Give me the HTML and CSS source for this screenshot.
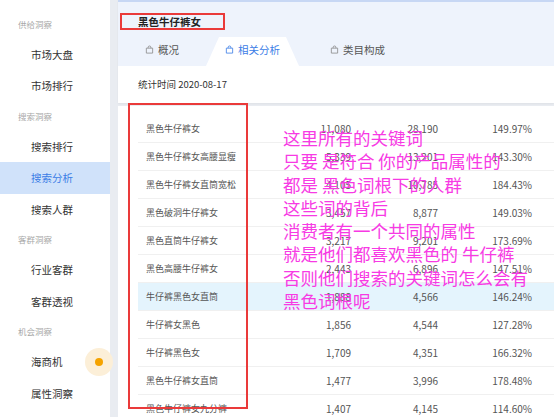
FILE: index.html
```html
<!DOCTYPE html>
<html lang="zh">
<head>
<meta charset="utf-8">
<title>搜索分析</title>
<link rel="stylesheet" href="styles.css">
</head>
<body>
<div class="app">
  <aside class="sidebar">
    <div class="group">供给洞察</div>
    <div class="item">市场大盘</div>
    <div class="item">市场排行</div>
    <div class="group">搜索洞察</div>
    <div class="item">搜索排行</div>
    <div class="item active">搜索分析</div>
    <div class="item">搜索人群</div>
    <div class="group">客群洞察</div>
    <div class="item">行业客群</div>
    <div class="item">客群透视</div>
    <div class="group">机会洞察</div>
    <div class="item has-dot">海商机<span class="dot"></span></div>
    <div class="item">属性洞察</div>
  </aside>
  <main class="main">
    <section class="head">
      <div class="topbar">
        <div class="title-row"><span class="title">黑色牛仔裤女</span></div>
        <nav class="tabs">
          <div class="tab"><svg class="ico" viewBox="0 0 10 10"><path d="M1.5 3.5h7v5.5h-7z M3.5 3.5V2.6a1.5 1.5 0 0 1 3 0v0.9"/></svg><span>概况</span></div>
          <div class="tab active"><svg class="ico" viewBox="0 0 10 10"><path d="M1.5 3.5h7v5.5h-7z M3.5 3.5V2.6a1.5 1.5 0 0 1 3 0v0.9"/></svg><span>相关分析</span></div>
          <div class="tab last"><svg class="ico" viewBox="0 0 10 10"><path d="M1.5 3.5h7v5.5h-7z M3.5 3.5V2.6a1.5 1.5 0 0 1 3 0v0.9"/></svg><span>类目构成</span></div>
        </nav>
      </div>
      <div class="stats">统计时间 2020-08-17</div>
    </section>
    <section class="table-card">
      <div class="row"><span class="kw">黑色牛仔裤女</span><span class="num">11,080</span><span class="num">28,190</span><span class="num">149.97%</span></div>
      <div class="row"><span class="kw">黑色牛仔裤女高腰显瘦</span><span class="num">5,339</span><span class="num">13,201</span><span class="num">143.30%</span></div>
      <div class="row"><span class="kw">黑色牛仔裤女直筒宽松</span><span class="num">4,105</span><span class="num">10,785</span><span class="num">184.43%</span></div>
      <div class="row"><span class="kw">黑色破洞牛仔裤女</span><span class="num">3,457</span><span class="num">8,877</span><span class="num">149.03%</span></div>
      <div class="row"><span class="kw">黑色直筒牛仔裤女</span><span class="num">3,217</span><span class="num">9,201</span><span class="num">173.69%</span></div>
      <div class="row"><span class="kw">黑色高腰牛仔裤女</span><span class="num">2,443</span><span class="num">6,896</span><span class="num">147.51%</span></div>
      <div class="row hl"><span class="kw">牛仔裤黑色女直筒</span><span class="num">1,888</span><span class="num">4,566</span><span class="num">146.24%</span></div>
      <div class="row"><span class="kw">牛仔裤女黑色</span><span class="num">1,856</span><span class="num">4,544</span><span class="num">127.28%</span></div>
      <div class="row"><span class="kw">牛仔裤黑色女</span><span class="num">1,709</span><span class="num">4,351</span><span class="num">166.32%</span></div>
      <div class="row"><span class="kw">黑色牛仔裤女直筒</span><span class="num">1,477</span><span class="num">3,996</span><span class="num">178.48%</span></div>
      <div class="row"><span class="kw">黑色牛仔裤女九分裤</span><span class="num">1,407</span><span class="num">4,145</span><span class="num">114.60%</span></div>
    </section>
    <div class="redbox"></div>
    <div class="note">这里所有的关键词<br>只要 是符合 你的产品属性的<br>都是 黑色词根下的人群<br>这些词的背后<br>消费者有一个共同的属性<br>就是他们都喜欢黑色的 牛仔裤<br>否则他们搜索的关键词怎么会有<br>黑色词根呢</div>
  </main>
</div>
</body>
</html>
```

FILE: styles.css
```css
* { box-sizing: border-box; }
html, body { margin: 0; padding: 0; }
body {
  width: 554px;
  height: 417px;
  overflow: hidden;
  background: #e9ecf1;
  font-family: "Noto Sans CJK SC", "Noto Sans", sans-serif;
  color: #333;
}
.app {
  display: flex;
  height: 417px;
}
.sidebar {
  width: 110px;
  flex: none;
  background: #fff;
  padding-top: 9.5px;
  display: flex;
  flex-direction: column;
}
.group {
  height: 29px;
  line-height: 29px;
  padding-left: 18px;
  font-size: 8.5px;
  color: #a9a9a9;
}
.item {
  position: relative;
  height: 31.5px;
  line-height: 31.5px;
  padding-left: 31px;
  font-size: 10.5px;
  color: #333;
}
.item.active {
  background: #d0e2fa;
  color: #3b7de6;
}
.dot {
  position: absolute;
  left: 85px;
  top: 1.5px;
  width: 28px;
  height: 28px;
  border-radius: 50%;
  background: #fcefd8;
}
.dot::after {
  content: "";
  position: absolute;
  left: 10px;
  top: 10px;
  width: 8px;
  height: 8px;
  border-radius: 50%;
  background: #f5a300;
}
.main {
  position: relative;
  flex: 1;
  margin-left: 8px;
  display: flex;
  flex-direction: column;
  gap: 3px;
}
.head {
  background: #fff;
  box-shadow: 0 1px 2px rgba(0,0,0,0.05);
}
.topbar {
  background: #eef3fc;
  border-top: 2px solid #c7d7f4;
  height: 66px;
  display: flex;
  flex-direction: column;
}
.title-row {
  padding-top: 5px;
  padding-left: 2px;
  height: 35px;
}
.title {
  display: inline-block;
  height: 17px;
  line-height: 13px;
  padding: 0 22px 0 16px;
  border: 2px solid #ea3a3a;
  font-size: 10.5px;
  font-weight: bold;
  color: #222;
}
.tabs {
  display: flex;
  height: 29px;
  padding-left: 27px;
}
.tab {
  position: relative;
  display: flex;
  align-items: center;
  gap: 4px;
  height: 25px;
  font-size: 10.5px;
  color: #555;
}
.tab span { position: relative; }
.tab.active {
  width: 93px;
  height: 29px;
  padding-bottom: 4px;
  margin-left: 27px;
  justify-content: center;
  color: #3b7de6;
}
.tab.active::before {
  content: "";
  position: absolute;
  inset: 0;
  background: #fff;
  border-radius: 6px 6px 0 0;
  clip-path: polygon(14% 0, 86% 0, 100% 100%, 0 100%);
}
.tab.last { margin-left: 31px; }
.ico {
  position: relative;
  width: 9px;
  height: 9px;
  fill: none;
  stroke: #8a8a8a;
  stroke-width: 0.9;
}
.tab.active .ico { stroke: #3b7de6; }
.stats {
  height: 37px;
  padding-left: 20px;
  padding-bottom: 2px;
  display: flex;
  align-items: center;
  font-size: 9.5px;
  color: #333;
}
.table-card {
  flex: 1;
  background: #fff;
  padding: 9px 0 0 20px;
}
.row {
  display: grid;
  grid-template-columns: 140px 65px 87px 94px;
  align-items: center;
  height: 28px;
  padding-left: 8px;
  border-bottom: 1px solid #f0f0f0;
  font-size: 9px;
  color: #555;
}
.row.hl { background: #e4f4fd; }
.num {
  text-align: right;
  font-size: 10px;
  color: #555;
}
.redbox {
  position: absolute;
  left: 10px;
  top: 103px;
  width: 120px;
  height: 306px;
  border: 2px solid #ea3a3a;
}
.note {
  position: absolute;
  left: 165px;
  top: 126px;
  font-size: 17.5px;
  line-height: 23.3px;
  color: #f73ae4;
  white-space: nowrap;
}
```
